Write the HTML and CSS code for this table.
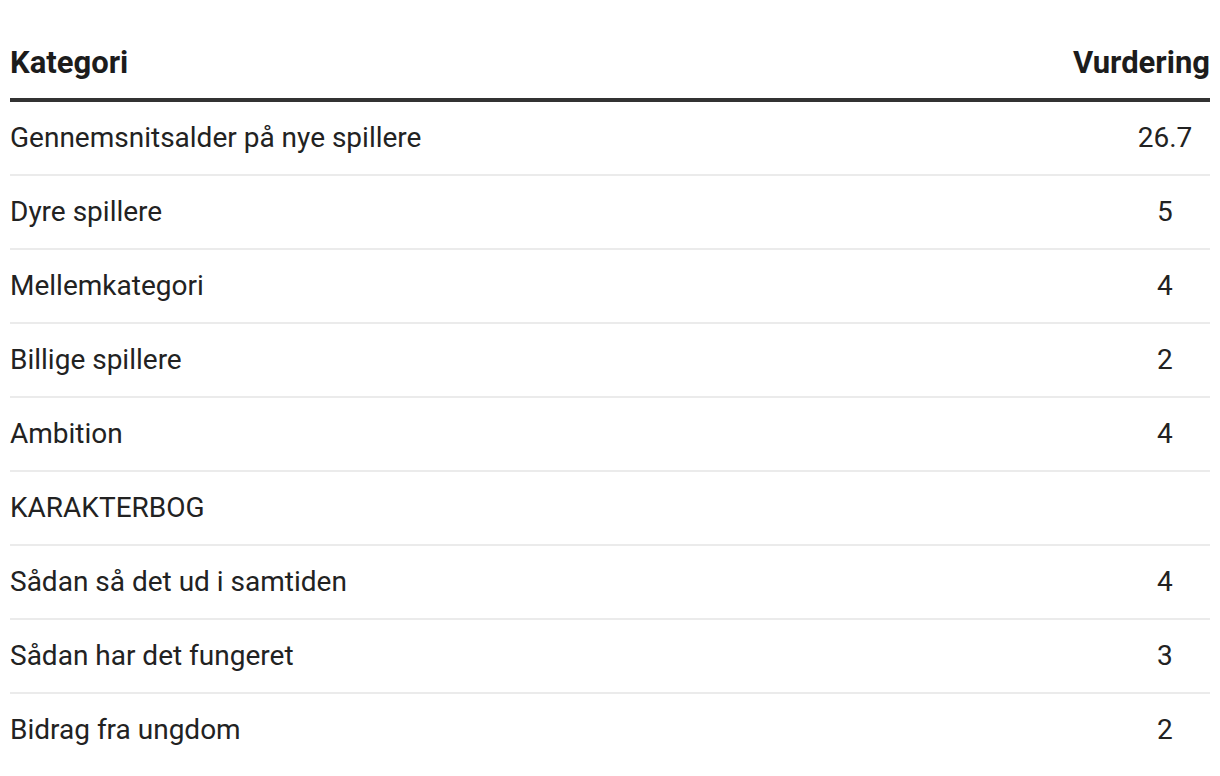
FILE: index.html
```html
<!DOCTYPE html>
<html lang="da">
<head>
<meta charset="utf-8">
<title>Vurdering</title>
<link rel="stylesheet" href="styles.css">
</head>
<body>
<div class="wrap">
<table class="ratings">
<thead>
<tr><th class="cat">Kategori</th><th class="val">Vurdering</th></tr>
</thead>
<tbody>
<tr><td class="cat">Gennemsnitsalder på nye spillere</td><td class="val">26.7</td></tr>
<tr><td class="cat">Dyre spillere</td><td class="val">5</td></tr>
<tr><td class="cat">Mellemkategori</td><td class="val">4</td></tr>
<tr><td class="cat">Billige spillere</td><td class="val">2</td></tr>
<tr><td class="cat">Ambition</td><td class="val">4</td></tr>
<tr><td class="cat">KARAKTERBOG</td><td class="val"></td></tr>
<tr><td class="cat">Sådan så det ud i samtiden</td><td class="val">4</td></tr>
<tr><td class="cat">Sådan har det fungeret</td><td class="val">3</td></tr>
<tr class="last"><td class="cat">Bidrag fra ungdom</td><td class="val">2</td></tr>
</tbody>
</table>
</div>
</body>
</html>
```
FILE: styles.css
```css
html, body {
  margin: 0;
  padding: 0;
  background: #ffffff;
}
body {
  font-family: Roboto, "Liberation Sans", sans-serif;
  color: #222222;
}
.wrap {
  padding: 0 10px;
}
.ratings {
  width: 100%;
  border-collapse: separate;
  border-spacing: 0;
  font-size: 28px;
  line-height: 32px;
}
.ratings th {
  font-size: 31px;
  line-height: 36px;
  font-weight: 700;
  height: 102px;
  box-sizing: border-box;
  vertical-align: bottom;
  padding: 0 0 17px 0;
  border-bottom: 4px solid #333333;
  color: #1c1c1c;
}
.ratings th.cat {
  text-align: left;
}
.ratings th.val {
  text-align: right;
  width: 136px;
}
.ratings td {
  height: 72px;
  padding: 0;
  vertical-align: middle;
  border-bottom: 2px solid #ebebeb;
}
.ratings td.cat {
  text-align: left;
}
.ratings td.val {
  text-align: center;
  padding-left: 47px;
}
.ratings tr.last td {
  border-bottom: none;
}
```
